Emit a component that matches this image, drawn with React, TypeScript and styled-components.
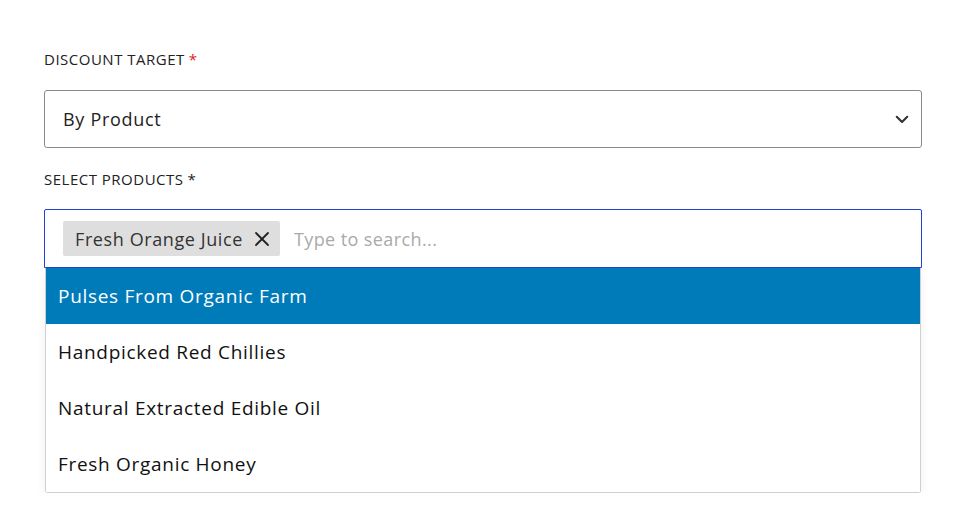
import React from "react";
import styled, { createGlobalStyle } from "styled-components";

const Global = createGlobalStyle`
  html, body { margin: 0; padding: 0; background: #fff; }
  body { font-family: "Open Sans", "Noto Sans", sans-serif; color: #222; }
`;

const Page = styled.div`
  padding: 50px 46px 0 44px;
  display: flex;
  flex-direction: column;
`;

const Label = styled.div<{ $gap: number }>`
  font-size: 15px;
  line-height: 18px;
  letter-spacing: 0.5px;
  color: #222;
  text-transform: uppercase;
  margin-bottom: ${(p) => p.$gap}px;
`;

const Star = styled.span<{ $red?: boolean }>`
  color: ${(p) => (p.$red ? "#e02020" : "#222")};
  margin-left: 4px;
`;

const SelectBox = styled.div`
  height: 56px;
  border: 1px solid #8a8a8a;
  border-radius: 3px;
  display: flex;
  align-items: center;
  justify-content: space-between;
  padding: 0 10px 0 18px;
  font-size: 18px;
  letter-spacing: 0.7px;
  color: #222;
  margin-bottom: 22px;
`;

const Field = styled.div`
  position: relative;
`;

const MultiBox = styled.div`
  height: 57px;
  border: 1px solid #2241d6;
  border-radius: 2px 2px 0 0;
  display: flex;
  align-items: center;
  padding: 0 18px;
  gap: 14px;
`;

const Chip = styled.div`
  display: flex;
  align-items: center;
  gap: 11px;
  height: 35px;
  padding: 0 10px 0 12px;
  background: #dedede;
  border-radius: 2px;
  font-size: 18px;
  letter-spacing: 0.6px;
  color: #333;
`;

const SearchInput = styled.input`
  border: none;
  outline: none;
  font-family: inherit;
  font-size: 18px;
  letter-spacing: 0.4px;
  color: #222;
  caret-color: #222;
  flex: 1;
  padding: 0;
  &::placeholder { color: #aaa; }
`;

const Menu = styled.ul`
  list-style: none;
  margin: 0 1px;
  padding: 0;
  border: 1px solid #cfcfcf;
  border-top: none;
  border-radius: 0 0 3px 3px;
  box-shadow: 0 4px 12px rgba(0, 0, 0, 0.06);
  background: #fff;
`;

const Option = styled.li<{ $active?: boolean }>`
  height: 56px;
  display: flex;
  align-items: center;
  padding: 0 12px;
  font-size: 19px;
  letter-spacing: 0.7px;
  background: ${(p) => (p.$active ? "#007bba" : "#fff")};
  color: ${(p) => (p.$active ? "#fff" : "#111")};
`;

const Chevron = () => (
  <svg width="18" height="18" viewBox="0 0 24 24" fill="none" stroke="#333" strokeWidth="2.8" strokeLinecap="round" strokeLinejoin="round">
    <polyline points="5 9 12 16 19 9" />
  </svg>
);

const Cross = () => (
  <svg width="16" height="16" viewBox="0 0 16 16" fill="none" stroke="#222" strokeWidth="1.8" strokeLinecap="round">
    <line x1="2" y1="2" x2="14" y2="14" />
    <line x1="14" y1="2" x2="2" y2="14" />
  </svg>
);

const options = [
  "Pulses From Organic Farm",
  "Handpicked Red Chillies",
  "Natural Extracted Edible Oil",
  "Fresh Organic Honey",
];

export default function App() {
  return (
    <>
      <Global />
      <Page>
        <Label $gap={22}>
          Discount Target<Star $red>*</Star>
        </Label>
        <SelectBox>
          <span>By Product</span>
          <Chevron />
        </SelectBox>
        <Label $gap={21}>
          Select Products<Star>*</Star>
        </Label>
        <Field>
          <MultiBox>
            <Chip>
              Fresh Orange Juice
              <Cross />
            </Chip>
            <SearchInput placeholder="Type to search..." autoFocus />
          </MultiBox>
          <Menu>
            {options.map((o, i) => (
              <Option key={o} $active={i === 0}>
                {o}
              </Option>
            ))}
          </Menu>
        </Field>
      </Page>
    </>
  );
}
